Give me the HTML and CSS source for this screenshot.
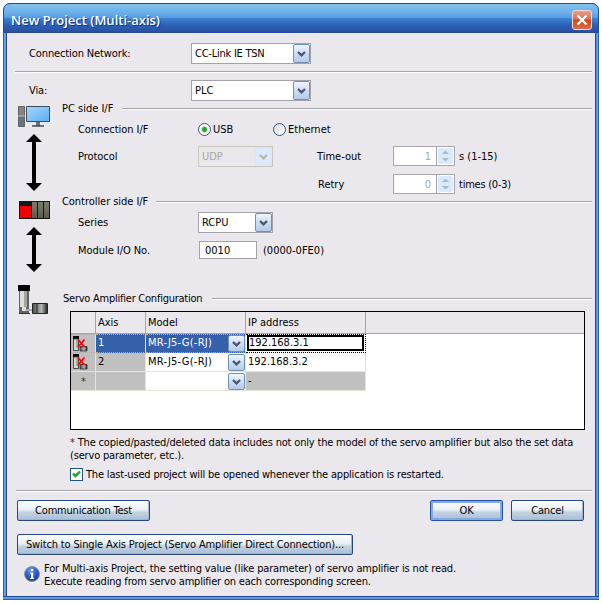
FILE: index.html
```html
<!DOCTYPE html>
<html lang="en">
<head>
<meta charset="utf-8">
<title>New Project (Multi-axis)</title>
<link rel="stylesheet" href="styles.css">
</head>
<body>
<svg class="defs" width="0" height="0">
  <defs>
    <linearGradient id="screen" x1="0" y1="0" x2="1" y2="1"><stop offset="0" stop-color="#a9d6fb"/><stop offset="1" stop-color="#58aef8"/></linearGradient>
    <linearGradient id="module" x1="0" y1="0" x2="0" y2="1"><stop offset="0" stop-color="#7c7c6c"/><stop offset="1" stop-color="#5a5a50"/></linearGradient>
    <linearGradient id="motor" x1="0" y1="0" x2="1" y2="0"><stop offset="0" stop-color="#4a4f4d"/><stop offset=".6" stop-color="#b4b9b6"/><stop offset=".75" stop-color="#7a7f7c"/><stop offset="1" stop-color="#1d1f1e"/></linearGradient>
    <radialGradient id="info" cx=".4" cy=".25" r=".8"><stop offset="0" stop-color="#6f9bea"/><stop offset=".5" stop-color="#2b5fd0"/><stop offset="1" stop-color="#12308f"/></radialGradient>
  </defs>
  <symbol id="chev" viewBox="0 0 9 6"><path d="M1 1l3.500 3.400L8 1" fill="none" stroke="currentColor" stroke-width="2.300"/></symbol>
  <symbol id="amp" viewBox="0 0 16 16"><path d="M1 0h6v3H1z" fill="#000"/><path d="M1.500 3v11.500h5V3z" fill="#d8d8d4" stroke="#4a4a48"/><path d="M5 4v8" stroke="#77776f"/><path d="M8 10.500h7v4.500H8z" fill="url(#motor)" stroke="#333" stroke-width=".8"/><path d="M6 3.500l6.500 7.500M12.500 3.500L6 11" stroke="#f00" stroke-width="1.900"/></symbol>
</svg>
<main class="window">
  <header class="titlebar">
    <h1>New Project (Multi-axis)</h1>
    <button class="close" aria-label="Close"><svg width="12" height="12" viewBox="0 0 12 12"><path d="M1.500 1.500l9 9M10.500 1.500l-9 9" stroke="#fff" stroke-width="2.400"/></svg></button>
  </header>
  <div class="content">
    <div class="top-row"><span class="caption">Connection Network:</span><div class="select wide"><span class="tight">CC-Link IE TSN</span><i class="drop"><svg><use href="#chev"/></svg></i></div></div>
    <hr>
    <div class="top-row via"><span class="caption">Via:</span><div class="select wide"><span>PLC</span><i class="drop"><svg><use href="#chev"/></svg></i></div></div>

    <div class="setup">
      <div class="rail">
        <svg class="pc" width="32" height="22" viewBox="0 0 32 22"><path d="M.5.5h6v20h-6z" fill="#858585" stroke="#636363"/><path d="M1 10h5v10H1z" fill="#68747c"/><path d="M0 10h7" stroke="#bbb"/><path d="M8.500 .5h23v15h-23z" fill="url(#screen)" stroke="#3f4b55"/><path d="M18 16h4v4h-4z" fill="#68747c"/><path d="M14 20h12" stroke="#3f4b55" stroke-width="1.500"/></svg>
        <svg class="arrow long" width="16" height="57" viewBox="0 0 16 57"><path d="M8 0L16 8H10V49H16L8 57L0 49H6V8H0z"/></svg>
        <svg class="plc" width="31" height="18" viewBox="0 0 31 18"><path d="M0 0h31v18H0z" fill="#111816"/><path d="M1 5h11v12H1z" fill="#f00000"/><path d="M13 1h5v16h-5zM19 1h5v16h-5zM25 1h5v16h-5z" fill="url(#module)"/></svg>
        <svg class="arrow" width="16" height="45" viewBox="0 0 16 45"><path d="M8 0L16 8H10V37H16L8 45L0 37H6V8H0z"/></svg>
        <svg class="servo" width="31" height="30" viewBox="0 0 31 30"><path d="M0 0h12v6H0z" fill="#000"/><path d="M1 6h10v23H1z" fill="#63665f"/><path d="M2 6h4v16H2z" fill="#dddeda"/><path d="M6 6h3v16H6z" fill="#a4a69f"/><path d="M4 22h4v4H4z" fill="#ddd"/><path d="M8 25h7" stroke="#aaa" stroke-width="2"/><path d="M14.500 18.500h15v10h-15z" fill="url(#motor)" stroke="#252525"/><path d="M19 19v9" stroke="#252525"/><path d="M1 28.500h11" stroke="#333"/></svg>
      </div>
      <div class="sections">
        <div class="section-head pc-head"><span>PC side I/F</span><hr></div>
        <div class="field"><span class="name">Connection I/F</span><i class="radio on"></i><span class="opt usb">USB</span><i class="radio"></i><span class="opt">Ethernet</span></div>
        <div class="field protocol"><span class="name">Protocol</span><div class="select small disabled"><span>UDP</span><i class="drop"><svg><use href="#chev"/></svg></i></div><span class="sub">Time-out</span><div class="spinner"><b>1</b><i><svg width="7" height="12" viewBox="0 0 7 12"><path d="M0 4L3.500 .5L7 4zM0 8L3.500 11.500L7 8z"/></svg></i></div><span>s (1-15)</span></div>
        <div class="field"><span class="sub retry">Retry</span><div class="spinner"><b>0</b><i><svg width="7" height="12" viewBox="0 0 7 12"><path d="M0 4L3.500 .5L7 4zM0 8L3.500 11.500L7 8z"/></svg></i></div><span class="tight">times (0-3)</span></div>
        <div class="section-head ctl-head"><span>Controller side I/F</span><hr></div>
        <div class="field series"><span class="name">Series</span><div class="select small"><span>RCPU</span><i class="drop"><svg><use href="#chev"/></svg></i></div></div>
        <div class="field module"><span class="name">Module I/O No.</span><div class="input">0010</div><span>(0000-0FE0)</span></div>
        <div class="section-head servo-head"><span class="tight">Servo Amplifier Configuration</span><hr></div>
      </div>
    </div>

    <div class="grid">
      <div class="row head"><span></span><span>Axis</span><span>Model</span><span>IP address</span><span></span></div>
      <div class="row selected"><span class="mark"><svg width="16" height="16"><use href="#amp"/></svg></span><span>1</span><span class="model"><em>MR-J5-G(-RJ)</em><i class="drop"><svg><use href="#chev"/></svg></i></span><span class="edit"><em>192.168.3.1</em></span></div>
      <div class="row"><span class="mark"><svg width="16" height="16"><use href="#amp"/></svg></span><span class="gray">2</span><span class="model"><em>MR-J5-G(-RJ)</em><i class="drop"><svg><use href="#chev"/></svg></i></span><span>192.168.3.2</span></div>
      <div class="row"><span class="mark star">*</span><span class="gray"></span><span class="model"><em></em><i class="drop"><svg><use href="#chev"/></svg></i></span><span class="gray">-</span></div>
    </div>

    <p class="note"><b class="asterisk">*</b> The copied/pasted/deleted data includes not only the model of the servo amplifier but also the set data<br>(servo parameter, etc.).</p>
    <div class="check"><i><svg width="9" height="9" viewBox="0 0 9 9"><path d="M1 3.500L3.500 6L8 1.500" fill="none" stroke="#21a121" stroke-width="2.400"/></svg></i><span>The last-used project will be opened whenever the application is restarted.</span></div>
    <hr class="foot-line">
    <div class="buttons"><button class="btn comm">Communication Test</button><button class="btn ok">OK</button><button class="btn cancel">Cancel</button></div>
    <button class="btn switch">Switch to Single Axis Project (Servo Amplifier Direct Connection)...</button>
    <div class="info"><svg width="16" height="16" viewBox="0 0 16 16"><circle cx="8" cy="8" r="7.500" fill="url(#info)" stroke="#8d939e"/><path d="M7 3h2.200v2H7zM6 6.500h3.200V12h1v1H6v-1h1V7.500H6z" fill="#fff"/></svg><p>For Multi-axis Project, the setting value (like parameter) of servo amplifier is not read.<br><span class="second">Execute reading from servo amplifier on each corresponding screen.</span></p></div>
  </div>
</main>
</body>
</html>
```
FILE: styles.css
```css
* { box-sizing: border-box; }
body { margin: 0; padding: 3px; background: #fff; font: 11px/13px "DejaVu Sans Condensed", "DejaVu Sans", sans-serif; font-stretch: condensed; color: #000; height: 603px; overflow: hidden; white-space: nowrap; }
.defs { position: absolute; }
svg { display: block; }
i, em { font-style: normal; }
b { font-weight: normal; }
h1, p { margin: 0; }
button { font: inherit; color: inherit; padding: 0; margin: 0; }
hr { margin: 0; border: 0; height: 2px; background: linear-gradient(#a5a5a8 50%, #fff 50%); }

.window { width: 596px; height: 597px; border-radius: 7px 7px 0 0; overflow: hidden; display: flex; flex-direction: column; padding: 0 4px 4px; background: linear-gradient(#2449a0 1px, #6a9fe2 1px, #5e95dc 3px, #2a5cb8 3px) left bottom / 100% 4px no-repeat, linear-gradient(90deg, #2a5cb8 1px, #6fa6e6 1px, #5e95dc 3px, #2449a0 3px, #2449a0 593px, #4a86da 593px, #74a8ea 595px, #2a5cb8 595px); }
.titlebar { margin: 0 -4px; height: 30px; flex: none; padding: 0 6px 0 7px; display: flex; align-items: center; justify-content: space-between; border-radius: 7px 7px 0 0; border: 1px solid #2449a0; background: linear-gradient(#84c2ee, #6db0ea 30%, #5a9ce6 48%, #3a82d2 52%, #2c62b8 75%, #2a4f9e); }
h1 { font: 600 13px/18px "Open Sans", "Noto Sans", sans-serif; color: #fff; text-shadow: 1px 1px 0 #14307e; padding-top: 4px; }
.close { width: 20px; height: 20px; margin-top: 3px; border: 1px solid #f2d8d2; border-radius: 3px; background: linear-gradient(#e8a08c, #dc7050 45%, #d8441a 50%, #e05a28 80%, #c87060); display: grid; place-items: center; }

.content { background: #ebe8ed; height: 563px; flex: none; display: flex; flex-direction: column; padding: 0 3px 0 8px; }
.top-row { height: 38px; padding: 10px 0 0 14px; display: flex; }
.top-row .caption { width: 162px; padding-top: 4px; letter-spacing: -.12px; }
.via { height: 27px; padding-top: 7px; }
.tight { letter-spacing: -.24px; }
.select { display: flex; border: 1px solid #a2a2a8; background: #fff; height: 21px; padding-left: 3px; align-items: center; justify-content: space-between; }
.wide { width: 120px; }
.small { width: 75px; }
.drop { width: 17px; height: 19px; border: 1px solid #6f92b4; border-radius: 2px; background: linear-gradient(#eef5fd, #cbdcf2 55%, #b4cae8); display: grid; place-items: center; color: #4b566b; }
.drop svg { width: 9px; height: 6px; }
.disabled { color: #a9a69f; border-color: #c9c7ba; background: transparent; }
.disabled .drop { border-color: #d8e6f6; background: #dceafc; color: #b9b8a8; }

.setup { display: grid; grid-template-columns: 47px 1fr; height: 207px; }
.rail { display: flex; flex-direction: column; padding: 6px 0 0 3px; }
.arrow { margin-left: 8px; }
.long { margin-top: 6px; }
.plc { margin: 10px 0 0 1px; }
.plc + .arrow { margin-top: 8px; }
.servo { margin-top: 13px; }
.section-head { display: flex; align-items: center; height: 20px; }
.section-head span { flex: none; margin-top: -2px; }
.section-head hr { flex: 1; }
.pc-head { gap: 9px; height: 18px; }
.field { display: flex; align-items: center; height: 22px; padding-left: 16px; }
.name { width: 120px; letter-spacing: -.05px; }
.radio { width: 13px; height: 13px; border: 1px solid #2b5a85; border-radius: 50%; background: linear-gradient(135deg, #d8d8d2, #fff); }
.on { background: radial-gradient(circle, #2aa52a 0 2px, #6fd06f 2.500px, #fff 3.500px); }
.opt { padding-left: 2px; }
.usb { width: 62px; }
.protocol { height: 33px; }
.sub { width: 76px; margin-left: 44px; }
.retry { margin-left: 240px; width: 75px; }
.spinner { display: flex; width: 62px; height: 20px; border: 1px solid #a6a6ac; background: #fff; margin-right: 4px; color: #a9a6a8; align-items: center; }
.protocol .spinner { margin-top: -1px; }
.spinner b { width: 43px; height: 18px; border-right: 1px solid #a6a6ac; text-align: right; padding: 3px 5px 0 0; }
.spinner i { width: 15px; height: 16px; margin: 0 1px; border-radius: 2px; background: #dbeafb; display: grid; place-items: center; }
.spinner svg { fill: #a3bad0; }
.ctl-head { height: 14px; gap: 8px; }
.ctl-head span { letter-spacing: -.05px; }
.series { height: 27px; }
.module { height: 28px; }
.input { width: 58px; height: 18px; margin: 0 6px 0 1px; border: 1px solid #a2a2a8; background: #fff; padding: 2px 5px; }
.servo-head { margin: 25px 0 0 1px; gap: 10px; }

.grid { margin-left: 55px; width: 515px; height: 119px; margin-top: 4px; border: 1px solid #000; background: #fff; flex: none; }
.row { display: grid; grid-template-columns: 25px 50px 100px 120px 1fr; height: 19px; }
.row > span { border: solid #e6e4d8; border-width: 0 1px 1px 0; padding: 2px 0 0 2px; height: 19px; }
.row.head { height: 22px; }
.row.head > span { height: 22px; background: #ebe8ed; border-color: #a6a6a8; padding-top: 4px; }
.row.head > span:last-child { border-right: 0; }
.row > .gray, .row > .mark { background: #c0c0c0; }
.row > .mark { padding: 1px 0 0 1px; }
.row > .star { text-align: center; color: #532c14; padding-top: 3px; }
.row > .model { display: flex; justify-content: space-between; padding-top: 0; letter-spacing: .25px; }
.model em { padding-top: 2px; }
.model .drop { height: 17px; margin-top: 1px; }
.selected > span { background: #3560aa; color: #fff; border-bottom: 1px dotted #e8a23c; border-top: 1px dotted #e8a23c; padding-top: 1px; }
.selected .model em { padding-top: 1px; }
.selected .model .drop { margin-top: 0; }
.selected > .edit { color: #000; background: #fff; border: 1px dotted #000; border-left: 0; padding: 0 1px 0 1px; }
.edit em { display: block; height: 16px; border: 2px solid #000; line-height: 11px; }

.note { margin: 6px 0 0 55px; letter-spacing: -.18px; }
.asterisk { color: #532c14; }
.check { margin: 6px 0 0 55px; display: flex; gap: 3px; height: 13px; letter-spacing: -.18px; }
.check i { width: 13px; height: 13px; border: 1px solid #24557f; background: #fff; display: grid; place-items: center; }
.foot-line { margin: 9px 0 0 1px; flex: none; }
.buttons { margin: 8px 0 0 2px; display: flex; }
.btn { height: 21px; border: 1px solid #27497f; border-radius: 2px; background: linear-gradient(#fcfdfe, #e9f0f4 45%, #c3d2e0 60%, #a9bdd6); box-shadow: inset -1px -1px #9fb4d0; letter-spacing: -.15px; }
.comm { width: 133px; letter-spacing: -.2px; }
.ok { width: 73px; margin-left: 280px; border-color: #2450a8; box-shadow: inset 0 0 0 2px #86a8e0; }
.cancel { width: 73px; margin-left: 8px; }
.switch { width: 336px; margin: 13px 0 0 2px; flex: none; }
.info { display: flex; margin: 7px 0 0 9px; gap: 4px; align-items: flex-start; letter-spacing: -.15px; }
.info svg { margin-top: 4px; }
.second { letter-spacing: -.19px; }
```
